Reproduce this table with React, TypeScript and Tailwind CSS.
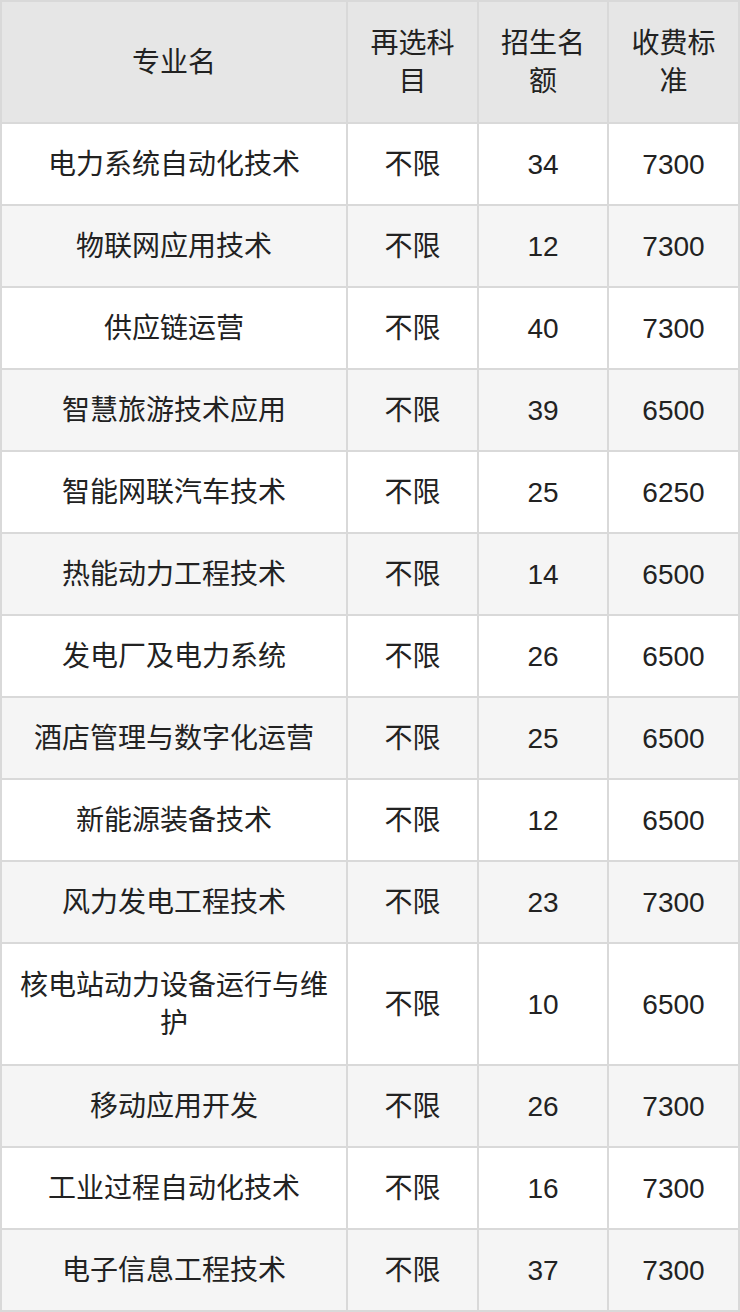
import React from "react";

const rows: [string, string, string, string][] = [
  ["电力系统自动化技术", "不限", "34", "7300"],
  ["物联网应用技术", "不限", "12", "7300"],
  ["供应链运营", "不限", "40", "7300"],
  ["智慧旅游技术应用", "不限", "39", "6500"],
  ["智能网联汽车技术", "不限", "25", "6250"],
  ["热能动力工程技术", "不限", "14", "6500"],
  ["发电厂及电力系统", "不限", "26", "6500"],
  ["酒店管理与数字化运营", "不限", "25", "6500"],
  ["新能源装备技术", "不限", "12", "6500"],
  ["风力发电工程技术", "不限", "23", "7300"],
  ["核电站动力设备运行与维护", "不限", "10", "6500"],
  ["移动应用开发", "不限", "26", "7300"],
  ["工业过程自动化技术", "不限", "16", "7300"],
  ["电子信息工程技术", "不限", "37", "7300"],
];

const headers = ["专业名", "再选科目", "招生名额", "收费标准"];

export default function App() {
  return (
    <div
      className="w-[740px] bg-white text-[28px] leading-[38px] text-[#222]"
      style={{ fontFamily: '"Liberation Sans", "Noto Sans CJK SC", sans-serif' }}
    >
      <div className="grid grid-cols-[344px_129px_128px_129px] gap-[2px] bg-[#d9d9d9] p-[2px]">
        {headers.map((h) => (
          <div
            key={h}
            className="flex min-h-[120px] items-center justify-center bg-[#e6e6e6] px-4 pt-[2px] text-center"
          >
            {h}
          </div>
        ))}
        {rows.map((r, i) =>
          r.map((c, j) => (
            <div
              key={`${i}-${j}`}
              className={`flex min-h-[80px] items-center justify-center px-4 pt-[2px] text-center ${
                r[0].length > 11 ? "min-h-[120px]" : ""
              } ${i % 2 === 0 ? "bg-white" : "bg-[#f5f5f5]"}`}
            >
              {c}
            </div>
          ))
        )}
      </div>
    </div>
  );
}
